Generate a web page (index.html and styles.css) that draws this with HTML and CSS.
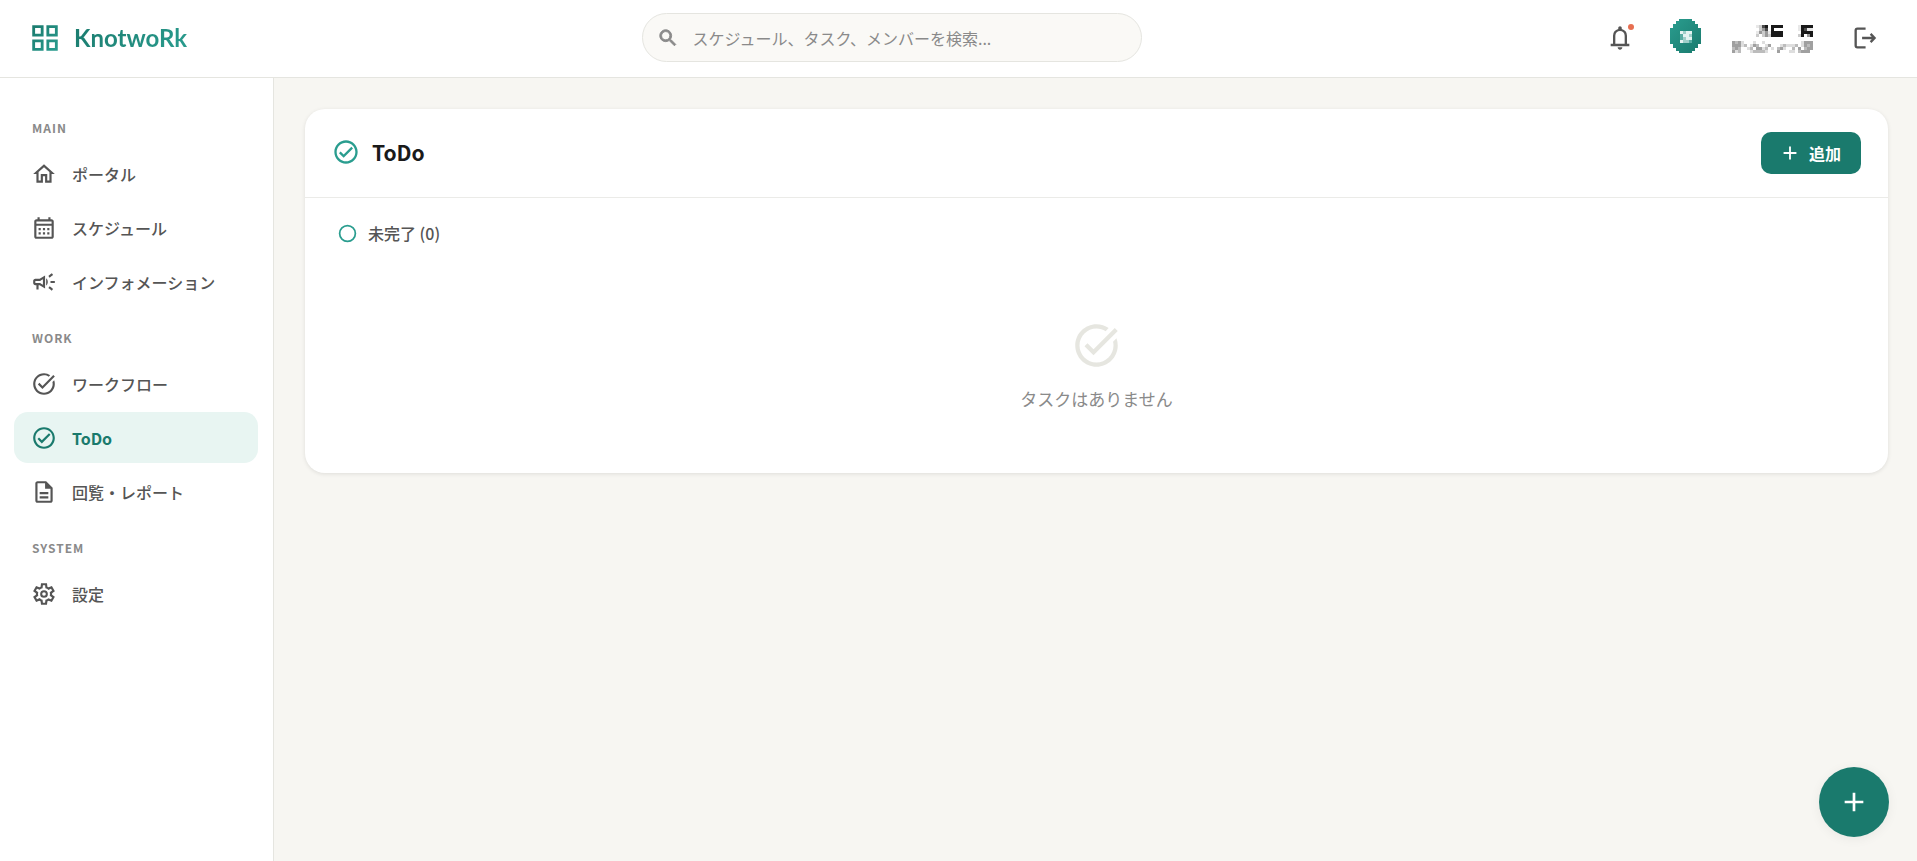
FILE: index.html
```html
<!DOCTYPE html>
<html lang="ja">
<head>
  <meta charset="UTF-8">
  <title>KnotwoRk - ToDo</title>
  <meta name="viewport" content="width=device-width, initial-scale=1.0">
  <link rel="stylesheet" href="styles.css">
</head>
<body>

  <header class="topbar">
    <a class="logo" href="#">
      <svg class="logo-icon" viewBox="0 0 24 24" aria-hidden="true">
        <defs>
          <linearGradient id="brand" x1="0" y1="0" x2="1" y2="1">
            <stop offset="0" stop-color="#1a7a6d"/>
            <stop offset="1" stop-color="#2a9d8f"/>
          </linearGradient>
        </defs>
        <path fill="url(#brand)" d="M3 3v8h8V3H3zm6 6H5V5h4v4zm-6 4v8h8v-8H3zm6 6H5v-4h4v4zm4-16v8h8V3h-8zm6 6h-4V5h4v4zm-6 4v8h8v-8h-8zm6 6h-4v-4h4v4z"/>
      </svg>
      <span class="logo-text">KnotwoRk</span>
    </a>

    <label class="search">
      <svg class="search-icon" viewBox="0 0 24 24" aria-hidden="true"><path d="M15.5 14h-.79l-.28-.27C15.41 12.59 16 11.11 16 9.5 16 5.91 13.09 3 9.5 3S3 5.91 3 9.5 5.91 16 9.5 16c1.61 0 3.09-.59 4.23-1.57l.27.28v.79l5 4.99L20.49 19l-4.99-5zm-6 0C7.01 14 5 11.99 5 9.5S7.01 5 9.5 5 14 7.01 14 9.5 11.99 14 9.5 14z"/></svg>
      <input type="search" aria-label="検索" placeholder="スケジュール、タスク、メンバーを検索...">
    </label>

    <div class="actions">
      <button class="icon-btn" type="button" aria-label="通知">
        <svg viewBox="0 -960 960 960" aria-hidden="true"><path d="M160-200v-80h80v-280q0-83 50-147.500T420-792v-28q0-25 17.500-42.500T480-880q25 0 42.500 17.500T540-820v28q80 20 130 84.500T720-560v280h80v80H160Zm320 120q-33 0-56.500-23.500T400-160h160q0 33-23.500 56.500T480-80ZM320-280h320v-280q0-66-47-113t-113-47q-66 0-113 47t-47 113v280Z"/></svg>
        <span class="dot"></span>
      </button>

      <div class="user">
        <svg class="avatar" viewBox="0 0 31 34" shape-rendering="crispEdges" aria-hidden="true">
          <defs>
            <linearGradient id="face" x1="0" y1="0" x2="1" y2="1">
              <stop offset="0" stop-color="#2a9d8f"/>
              <stop offset="1" stop-color="#1a7a6d"/>
            </linearGradient>
          </defs>
          <path fill="url(#face)" d="M9 0h13v2h3v3h3v4h3v16h-3v4h-3v3h-3v2H9v-2H6v-3H3v-4H0V9h3V5h3V2h3z"/>
          <path fill="#9fcfc9" d="M10 12h12v12H10z"/>
          <path fill="#e4f3f1" d="M10 12h3v3h-3zM16 12h6v3h-6zM13 15h6v3h-6zM19 18h3v3h-3zM10 21h3v3h-3zM16 18h3v3h-3z"/>
          <path fill="#58aca2" d="M10 15h3v6h-3zM19 21h3v3h-3z"/>
        </svg>
        <div class="user-info">
          <!-- masked user name -->
          <svg class="mask-name" viewBox="0 0 19 4" shape-rendering="crispEdges" aria-hidden="true">
            <path stroke="#191919" d="M3 .5h1m1 0h4m6 0h4M5 1.500h1m9 0h1M5 2.500h4m6 0h4M5 3.500h4m6 0h1m2 0h1"/>
            <path stroke="#4b4b4b" d="M2 .5h1M3 1.500h1m12 0h1"/>
            <path stroke="#999" d="M2 1.500h1M1 2.500h1m1 0h1M3 3.500h1m13 0h1"/>
            <path stroke="#ccc" d="M1 .5h1M1 1.500h1M2 2.500h1M0 3.500h1m1 0h1m1 0h1m9 0h1"/>
            <path stroke="#e8e8e8" d="M0 .5h1m13 0h1M14 1.500h1m2 0h2M0 2.500h1m3 0h1"/>
          </svg>
          <!-- masked department -->
          <svg class="mask-dept" viewBox="0 0 27 4" shape-rendering="crispEdges" aria-hidden="true">
            <path stroke="#a0a0a0" d="M0 .5h1m1 0h1m21 0h3M0 1.500h3m4 0h1m4 0h1m11 0h1m1 0h1M1 2.500h1m6 0h2m6 0h1m5 0h1m1 0h3M0 3.500h1m14 0h1m6 0h4"/>
            <path stroke="#bcbcbc" d="M1 .5h1m5 0h1M4 1.500h1m3 0h1m8 0h1m3 0h1m3 0h1M0 2.500h1m1 0h1m3 0h1m4 0h1m3 0h1m4 0h1m3 0h1M2 3.500h1m4 0h4m11 0h1"/>
            <path stroke="#dedede" d="M3 .5h1m3 0h1m2 0h1m12 0h1M3 1.500h1m2 0h1m4 0h1m4 0h1m1 0h3m2 0h1M5 2.500h1m4 0h1m2 0h1m3 0h1M1 3.500h1m4 0h1m4 0h1m7 0h2"/>
          </svg>
        </div>
      </div>

      <button class="icon-btn" type="button" aria-label="ログアウト">
        <svg class="line" viewBox="0 0 24 24" aria-hidden="true"><path d="M12.500 4H5.500C4.600 4 4 4.600 4 5.500v13c0 .9.600 1.500 1.500 1.500h7M9.500 12H20M16.800 8.500l3.400 3.500-3.400 3.500"/></svg>
      </button>
    </div>
  </header>

  <div class="layout">
    <nav class="sidebar">
      <h2 class="nav-title">MAIN</h2>
      <div class="nav-group">
        <a class="nav-item" href="#">
          <svg viewBox="0 0 24 24" aria-hidden="true"><path d="M12 5.690l5 4.500V18h-2v-6H9v6H7v-7.810l5-4.500M12 3L2 12h3v8h6v-6h2v6h6v-8h3L12 3z"/></svg>
          ポータル
        </a>
        <a class="nav-item" href="#">
          <svg viewBox="0 0 24 24" aria-hidden="true"><path d="M19 4h-1V2h-2v2H8V2H6v2H5c-1.110 0-1.990.9-1.990 2L3 20c0 1.100.89 2 2 2h14c1.100 0 2-.9 2-2V6c0-1.100-.9-2-2-2zm0 16H5V10h14v10zm0-12H5V6h14v2zM9 14H7v-2h2v2zm4 0h-2v-2h2v2zm4 0h-2v-2h2v2zm-8 4H7v-2h2v2zm4 0h-2v-2h2v2zm4 0h-2v-2h2v2z"/></svg>
          スケジュール
        </a>
        <a class="nav-item" href="#">
          <svg viewBox="0 0 24 24" aria-hidden="true"><path d="M18 11v2h4v-2h-4zM16 17.610c.96.71 2.210 1.650 3.200 2.390.4-.53.8-1.070 1.200-1.600-.99-.74-2.240-1.680-3.200-2.400-.4.54-.8 1.080-1.200 1.610zM20.400 5.600c-.4-.53-.8-1.070-1.200-1.600-.99.74-2.240 1.680-3.200 2.400.4.53.8 1.070 1.200 1.600.96-.72 2.210-1.650 3.200-2.400zM4 9c-1.100 0-2 .9-2 2v2c0 1.100.9 2 2 2h1v4h2v-4h1l5 3V6L8 9H4zm5.030 1.710L11 9.530v4.940l-1.970-1.180-.48-.29H4v-2h4.550l.48-.29zM15.500 12c0-1.330-.58-2.530-1.500-3.350v6.690c.92-.81 1.500-2.010 1.500-3.340z"/></svg>
          インフォメーション
        </a>
      </div>

      <h2 class="nav-title">WORK</h2>
      <div class="nav-group">
        <a class="nav-item" href="#">
          <svg viewBox="0 0 24 24" aria-hidden="true"><path d="M22 5.180L10.590 16.600l-4.240-4.240 1.410-1.410 2.830 2.830 10-10L22 5.180zm-2.210 5.040c.13.57.21 1.170.21 1.780 0 4.420-3.580 8-8 8s-8-3.580-8-8 3.580-8 8-8c1.580 0 3.040.46 4.280 1.250l1.440-1.440C16.100 2.670 14.130 2 12 2 6.480 2 2 6.480 2 12s4.480 10 10 10 10-4.480 10-10c0-1.190-.22-2.330-.6-3.390l-1.610 1.610z"/></svg>
          ワークフロー
        </a>
        <a class="nav-item active" href="#" aria-current="page">
          <svg viewBox="0 0 24 24" aria-hidden="true"><path d="M16.590 7.580L10 14.170l-2.590-2.580L6 13l4 4 8-8zM12 2C6.480 2 2 6.480 2 12s4.480 10 10 10 10-4.480 10-10S17.520 2 12 2zm0 18c-4.420 0-8-3.580-8-8s3.580-8 8-8 8 3.580 8 8-3.580 8-8 8z"/></svg>
          ToDo
        </a>
        <a class="nav-item" href="#">
          <svg viewBox="0 0 24 24" aria-hidden="true"><path d="M8 16h8v2H8zm0-4h8v2H8zm6-10H6c-1.100 0-2 .9-2 2v16c0 1.100.89 2 1.990 2H18c1.100 0 2-.9 2-2V8l-6-6zm4 18H6V4h7v5h5v11z"/></svg>
          回覧・レポート
        </a>
      </div>

      <h2 class="nav-title">SYSTEM</h2>
      <div class="nav-group">
        <a class="nav-item" href="#">
          <svg viewBox="0 -960 960 960" aria-hidden="true"><path d="m370-80-16-128q-13-5-24.500-12T307-235l-119 50L78-375l103-78q-1-7-1-13.500v-27q0-6.500 1-13.500L78-585l110-190 119 50q11-8 23-15t24-12l16-128h220l16 128q13 5 24.500 12t22.500 15l119-50 110 190-103 78q1 7 1 13.500v27q0 6.500-2 13.500l103 78-110 190-118-50q-11 8-23 15t-24 12L590-80H370Zm70-80h79l14-106q31-8 57.500-23.500T639-327l99 41 39-68-86-65q5-14 7-29.500t2-31.500q0-16-2-31.500t-7-29.500l86-65-39-68-99 42q-22-23-48.500-38.500T533-694l-13-106h-79l-14 106q-31 8-57.500 23.500T321-633l-99-41-39 68 86 64q-5 15-7 30t-2 32q0 16 2 31t7 30l-86 65 39 68 99-42q22 23 48.500 38.500T427-266l13 106Z"/><circle class="ring" cx="480" cy="-480" r="105"/></svg>
          設定
        </a>
      </div>
    </nav>

    <main class="content">
      <section class="card">
        <div class="card-header">
          <h1 class="card-title">
            <svg viewBox="0 0 24 24" aria-hidden="true"><path d="M16.590 7.580L10 14.170l-2.590-2.580L6 13l4 4 8-8zM12 2C6.480 2 2 6.480 2 12s4.480 10 10 10 10-4.480 10-10S17.520 2 12 2zm0 18c-4.420 0-8-3.580-8-8s3.580-8 8-8 8 3.580 8 8-3.580 8-8 8z"/></svg>
            ToDo
          </h1>
          <button class="add-btn" type="button">
            <svg viewBox="0 0 24 24" aria-hidden="true"><path d="M19 13h-6v6h-2v-6H5v-2h6V5h2v6h6z"/></svg>
            追加
          </button>
        </div>

        <div class="card-body">
          <h2 class="section-title">
            <svg viewBox="0 0 24 24" aria-hidden="true"><circle cx="12" cy="12" r="9"/></svg>
            未完了 (0)
          </h2>
          <div class="empty">
            <svg viewBox="0 0 24 24" aria-hidden="true"><path d="M22 5.180L10.590 16.600l-4.240-4.240 1.410-1.410 2.830 2.830 10-10L22 5.180zm-2.210 5.040c.13.57.21 1.170.21 1.780 0 4.420-3.580 8-8 8s-8-3.580-8-8 3.580-8 8-8c1.580 0 3.040.46 4.280 1.250l1.440-1.440C16.100 2.670 14.130 2 12 2 6.480 2 2 6.480 2 12s4.480 10 10 10 10-4.480 10-10c0-1.190-.22-2.330-.6-3.390l-1.610 1.610z"/></svg>
            <p>タスクはありません</p>
          </div>
        </div>
      </section>
    </main>
  </div>

  <button class="fab" type="button" aria-label="新規作成">
    <svg viewBox="0 0 24 24" aria-hidden="true"><path d="M19 13h-6v6h-2v-6H5v-2h6V5h2v6h6z"/></svg>
  </button>

</body>
</html>
```

FILE: styles.css
```css
:root {
  --primary: #1a7a6d;
  --primary-light: #2a9d8f;
  --primary-soft: #e8f5f2;
  --bg: #f7f6f2;
  --surface: #fff;
  --border: #e5e5e0;
  --text: #1a1a1a;
  --text-sub: #555;
  --text-muted: #8a8a8a;
  --danger: #e76f51;
}

* {
  box-sizing: border-box;
}

body {
  margin: 0;
  min-height: 100vh;
  display: flex;
  flex-direction: column;
  font-family: "Noto Sans CJK JP", sans-serif;
  font-size: 16px;
  line-height: 24px;
  background: var(--bg);
  color: var(--text);
}

svg {
  display: block;
  flex-shrink: 0;
  fill: currentColor;
}

h1, h2, p {
  margin: 0;
}

button {
  border: none;
  font-family: inherit;
  cursor: pointer;
}

/* header */
.topbar {
  height: 78px;
  padding: 0 28px 2px;
  display: flex;
  align-items: center;
  justify-content: space-between;
  background: var(--surface);
  border-bottom: 1px solid var(--border);
}

.logo {
  display: flex;
  align-items: center;
  gap: 12px;
  text-decoration: none;
}

.logo-icon {
  width: 34px;
  height: 34px;
}

.logo-text {
  font-family: Lato, sans-serif;
  font-size: 24px;
  font-weight: 700;
  line-height: 32px;
  background: linear-gradient(135deg, var(--primary), var(--primary-light));
  background-clip: text;
  -webkit-background-clip: text;
  color: transparent;
}

.search {
  width: 500px;
  height: 49px;
  padding: 0 14px;
  display: flex;
  align-items: center;
  gap: 14px;
  background: #faf9f6;
  border: 1px solid var(--border);
  border-radius: 25px;
}

.search-icon {
  width: 22px;
  height: 22px;
  color: var(--text-muted);
  stroke: currentColor;
  stroke-width: 1;
}

.search input {
  flex: 1;
  min-width: 0;
  padding: 0;
  border: none;
  outline: none;
  background: none;
  font-family: inherit;
  font-size: 16px;
  color: var(--text);
}

.search input::placeholder {
  color: var(--text-muted);
}

.actions {
  display: flex;
  align-items: center;
  gap: 26px;
}

.icon-btn {
  position: relative;
  width: 48px;
  height: 48px;
  padding: 0;
  display: flex;
  align-items: center;
  justify-content: center;
  background: none;
  color: var(--text-sub);
}

.icon-btn svg {
  width: 28px;
  height: 28px;
}

.icon-btn .line {
  fill: none;
  stroke: currentColor;
  stroke-width: 2;
}

.dot {
  position: absolute;
  top: 10px;
  right: 10px;
  width: 6px;
  height: 6px;
  border-radius: 50%;
  background: var(--danger);
}

.user {
  padding: 0 2px 4px 0;
  display: flex;
  align-items: flex-end;
  gap: 31px;
}

.avatar {
  width: 31px;
  height: 34px;
}

.user-info {
  display: flex;
  flex-direction: column;
  align-items: flex-end;
  gap: 4px;
}

.mask-name {
  width: 57px;
  height: 12px;
}

.mask-dept {
  width: 81px;
  height: 12px;
}

/* sidebar */
.layout {
  flex: 1;
  display: flex;
}

.sidebar {
  width: 274px;
  flex-shrink: 0;
  padding: 19px 15px 19px 14px;
  background: var(--surface);
  border-right: 1px solid var(--border);
}

.nav-title {
  margin: 21px 0 10px;
  padding: 0 18px;
  font-size: 12px;
  font-weight: 700;
  line-height: 20px;
  letter-spacing: 1px;
  color: var(--text-muted);
}

.nav-group {
  display: flex;
  flex-direction: column;
  gap: 3px;
}

.nav-item {
  height: 51px;
  padding: 0 17px;
  display: flex;
  align-items: center;
  gap: 15px;
  border-radius: 14px;
  font-weight: 500;
  color: var(--text-sub);
  text-decoration: none;
}

.nav-item svg {
  width: 26px;
  height: 26px;
}

.nav-item .ring {
  fill: none;
  stroke: currentColor;
  stroke-width: 75;
}

.nav-item:hover {
  background: var(--bg);
}

.nav-item.active {
  background: var(--primary-soft);
  color: var(--primary);
  font-weight: 700;
}

/* content */
.content {
  flex: 1;
  padding: 31px 29px 31px 31px;
}

.card {
  background: var(--surface);
  border-radius: 20px;
  box-shadow: 0 1px 4px rgba(0, 0, 0, 0.1);
}

.card-header {
  padding: 23px 27px;
  display: flex;
  align-items: center;
  justify-content: space-between;
  border-bottom: 1px solid #ebebe8;
}

.card-title {
  padding-bottom: 2px;
  display: flex;
  align-items: center;
  gap: 12px;
  font-size: 21px;
  font-weight: 700;
  line-height: 32px;
}

.card-title svg {
  width: 28px;
  height: 28px;
  color: var(--primary-light);
}

.add-btn {
  height: 42px;
  padding: 0 20px 0 18px;
  display: flex;
  align-items: center;
  gap: 8px;
  border-radius: 10px;
  background: var(--primary);
  color: #fff;
  font-size: 16px;
  font-weight: 700;
}

.add-btn svg {
  width: 22px;
  height: 22px;
}

.card-body {
  padding: 23px 32px 62px;
}

.section-title {
  display: flex;
  align-items: center;
  gap: 10px;
  font-size: 16px;
  font-weight: 500;
  line-height: 24px;
  color: var(--text-sub);
}

.section-title svg {
  width: 21px;
  height: 21px;
  fill: none;
  stroke: var(--primary-light);
  stroke-width: 2;
}

.empty {
  padding-top: 75px;
  display: flex;
  flex-direction: column;
  align-items: center;
  gap: 16px;
  font-size: 17px;
  color: var(--text-muted);
}

.empty svg {
  width: 51px;
  height: 51px;
  color: #e6e6e0;
}

.fab {
  position: fixed;
  right: 28px;
  bottom: 24px;
  width: 70px;
  height: 70px;
  padding: 0;
  display: flex;
  align-items: center;
  justify-content: center;
  border-radius: 50%;
  background: var(--primary);
  color: #fff;
  box-shadow: 0 2px 12px rgba(0, 0, 0, 0.06);
}

.fab svg {
  width: 32px;
  height: 32px;
}
```
